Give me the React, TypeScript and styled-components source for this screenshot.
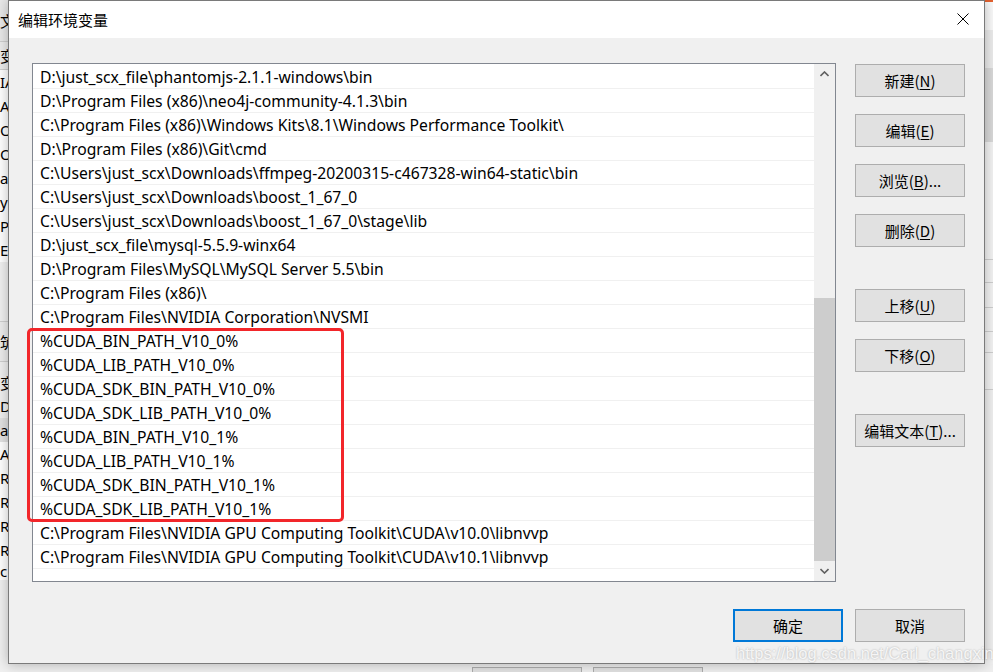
import React from "react";
import styled, { createGlobalStyle } from "styled-components";

const GlobalStyle = createGlobalStyle`
  *, *::before, *::after { box-sizing: border-box; }
  html, body { margin: 0; padding: 0; }
  body {
    background: #f0f0f0;
    font-family: "Noto Sans", "Noto Sans CJK SC", sans-serif;
  }
`;

const pathsBefore = [
  "D:\\just_scx_file\\phantomjs-2.1.1-windows\\bin",
  "D:\\Program Files (x86)\\neo4j-community-4.1.3\\bin",
  "C:\\Program Files (x86)\\Windows Kits\\8.1\\Windows Performance Toolkit\\",
  "D:\\Program Files (x86)\\Git\\cmd",
  "C:\\Users\\just_scx\\Downloads\\ffmpeg-20200315-c467328-win64-static\\bin",
  "C:\\Users\\just_scx\\Downloads\\boost_1_67_0",
  "C:\\Users\\just_scx\\Downloads\\boost_1_67_0\\stage\\lib",
  "D:\\just_scx_file\\mysql-5.5.9-winx64",
  "D:\\Program Files\\MySQL\\MySQL Server 5.5\\bin",
  "C:\\Program Files (x86)\\",
  "C:\\Program Files\\NVIDIA Corporation\\NVSMI",
];

const cudaVars = [
  "%CUDA_BIN_PATH_V10_0%",
  "%CUDA_LIB_PATH_V10_0%",
  "%CUDA_SDK_BIN_PATH_V10_0%",
  "%CUDA_SDK_LIB_PATH_V10_0%",
  "%CUDA_BIN_PATH_V10_1%",
  "%CUDA_LIB_PATH_V10_1%",
  "%CUDA_SDK_BIN_PATH_V10_1%",
  "%CUDA_SDK_LIB_PATH_V10_1%",
];

const pathsAfter = [
  "C:\\Program Files\\NVIDIA GPU Computing Toolkit\\CUDA\\v10.0\\libnvvp",
  "C:\\Program Files\\NVIDIA GPU Computing Toolkit\\CUDA\\v10.1\\libnvvp",
];

// side buttons: label, access key, trailing text, gap above
const sideButtons = [
  { label: "新建", key: "N", tail: "", gap: 0 },
  { label: "编辑", key: "E", tail: "", gap: 17 },
  { label: "浏览", key: "B", tail: "...", gap: 17 },
  { label: "删除", key: "D", tail: "", gap: 17 },
  { label: "上移", key: "U", tail: "", gap: 42 },
  { label: "下移", key: "O", tail: "", gap: 17 },
  { label: "编辑文本", key: "T", tail: "...", gap: 42 },
];

// the window behind, only a sliver of it shows
const peekRows = [
  { h: 42, bg: "#e9e9e9", text: "文_", line: true },
  { h: 28, bg: "#ececec", text: "变", line: true },
  { h: 24, bg: "#fff", text: "IA" },
  { h: 24, bg: "#fff", text: "A" },
  { h: 24, bg: "#fff", text: "Or" },
  { h: 24, bg: "#fff", text: "Or" },
  { h: 24, bg: "#fff", text: "a" },
  { h: 24, bg: "#fff", text: "y" },
  { h: 24, bg: "#fff", text: "P" },
  { h: 24, bg: "#fff", text: "E" },
  { h: 60, bg: "#f0f0f0", text: "", line: true },
  { h: 40, bg: "#ececec", text: "筑", line: true },
  { h: 8, bg: "#f0f0f0", text: "" },
  { h: 24, bg: "#f0f0f0", text: "变" },
  { h: 24, bg: "#f0f0f0", text: "DS" },
  { h: 24, bg: "#e2e2e2", text: "a" },
  { h: 24, bg: "#fff", text: "A" },
  { h: 24, bg: "#fff", text: "R" },
  { h: 24, bg: "#fff", text: "R" },
  { h: 24, bg: "#fff", text: "R" },
  { h: 24, bg: "#fff", text: "R" },
  { h: 18, bg: "#fff", text: "c" },
];

const rightPeek = [
  { h: 2, bg: "#e4622f" },
  { h: 28, bg: "#fafafa" },
  { h: 38, bg: "#ececec" },
  { h: 74, bg: "#d9d9d9" },
  { h: 86, bg: "#f3f3f3" },
  { h: 32, bg: "#f3f3f3", line: true },
  { h: 23, bg: "#f3f3f3", line: true },
  { h: 25, bg: "#f3f3f3", line: true },
  { h: 24, bg: "#f3f3f3", line: true },
  { h: 21, bg: "#f3f3f3", line: true },
  { h: 37, bg: "#f3f3f3", line: true },
];

const Desktop = styled.div`
  position: relative;
  width: 993px;
  height: 672px;
  overflow: hidden;
  display: grid;
  grid-template-columns: 8px 977px 8px;
  grid-template-rows: 664px 8px;
  background: #f0f0f0;
`;

const LeftPeek = styled.div`
  grid-row: 1 / span 2;
  grid-column: 1;
  display: flex;
  flex-direction: column;
  overflow: hidden;
  font-size: 15px;
  color: #000;
`;

const PeekRow = styled.div<{ $h: number; $bg: string; $line?: boolean }>`
  flex: 0 0 ${(p) => p.$h}px;
  background: ${(p) => p.$bg};
  border-bottom: ${(p) => (p.$line ? "1px solid #cfcfcf" : "0")};
  display: flex;
  align-items: center;
  white-space: nowrap;
  overflow: hidden;
  font-family: "Noto Sans", "Noto Sans CJK SC", sans-serif;
`;

const RightPeek = styled.div`
  grid-row: 1;
  grid-column: 3;
  display: flex;
  flex-direction: column;
  overflow: hidden;
`;

const BottomPeek = styled.div`
  grid-row: 2;
  grid-column: 2 / span 2;
  display: flex;
  gap: 11px;
  padding: 3px 0 0 464px;
  background: #efefef;
`;

const PeekButton = styled.div`
  flex: 0 0 110px;
  border: 1px solid #adadad;
  border-bottom: 0;
  background: #e1e1e1;
`;

const Dialog = styled.div`
  grid-row: 1;
  grid-column: 2;
  position: relative;
  z-index: 1;
  display: flex;
  flex-direction: column;
  background: #f0f0f0;
  border: 1px solid #7a7a7a;
  box-shadow: 0 0 12px rgba(0, 0, 0, 0.28);
`;

const TitleBar = styled.div`
  flex: 0 0 37px;
  display: flex;
  align-items: center;
  justify-content: space-between;
  padding: 0 15px 1px 9px;
  background: #fff;
`;

const Title = styled.span`
  font: 15px "Noto Sans CJK SC", sans-serif;
  color: #000;
`;

const CloseIcon = () => (
  <svg width="12" height="12" viewBox="0 0 12 12">
    <path d="M0.5 0.5 L11.5 11.5 M11.5 0.5 L0.5 11.5" stroke="#000" strokeWidth="1" fill="none" />
  </svg>
);

const Body = styled.div`
  flex: 1;
  display: flex;
  flex-direction: column;
  padding: 25px 19px 21px 23px;
`;

const MainRow = styled.div`
  display: flex;
  gap: 19px;
`;

const ListBox = styled.div`
  position: relative;
  flex: 0 0 804px;
  height: 519px;
  display: flex;
  background: #fff;
  border: 1px solid #828790;
`;

const Rows = styled.div`
  flex: 1;
  padding-top: 1px;
`;

const Row = styled.div`
  height: 24px;
  line-height: 25px;
  padding-left: 7px;
  border-bottom: 1px solid #f0f0f0;
  font-size: 15.7px;
  color: #000;
  white-space: nowrap;
`;

const Marked = styled.div`
  position: relative;
  &::after {
    content: "";
    position: absolute;
    left: -6px;
    top: -1px;
    width: 317px;
    height: 194px;
    border: 3.5px solid #f2262a;
    border-radius: 5px;
    pointer-events: none;
  }
`;

const ScrollBar = styled.div`
  flex: 0 0 21px;
  display: flex;
  flex-direction: column;
  background: #f0f0f0;
`;

const ScrollArrow = styled.div`
  flex: 0 0 20px;
  display: flex;
  align-items: center;
  justify-content: center;
`;

const ScrollTrack = styled.div`
  flex: 1;
  display: flex;
  flex-direction: column;
  justify-content: flex-end;
`;

const Thumb = styled.div`
  height: 263px;
  background: #cdcdcd;
`;

const Chevron = ({ up }: { up?: boolean }) => (
  <svg width="9" height="6" viewBox="0 0 9 6">
    <polyline
      points={up ? "0.5,5 4.5,1 8.5,5" : "0.5,1 4.5,5 8.5,1"}
      stroke="#606060"
      strokeWidth="1.6"
      fill="none"
    />
  </svg>
);

const ButtonColumn = styled.div`
  display: flex;
  flex-direction: column;
  padding-top: 1px;
`;

const Button = styled.button<{ $gap?: number; $default?: boolean }>`
  width: 110px;
  height: 33px;
  margin-top: ${(p) => p.$gap ?? 0}px;
  padding: 0;
  background: #e1e1e1;
  border: ${(p) => (p.$default ? "2px solid #0078d7" : "1px solid #adadad")};
  font: 15px "Noto Sans CJK SC", sans-serif;
  color: #000;

  u {
    text-underline-offset: 2px;
  }
`;

const Footer = styled.div`
  display: flex;
  justify-content: flex-end;
  gap: 12px;
  margin-top: 27px;
`;

const Watermark = styled.div`
  position: absolute;
  left: 736px;
  top: 644px;
  z-index: 2;
  font: 16.5px "Liberation Sans", Arial, sans-serif;
  color: rgba(255, 255, 255, 0.85);
  text-shadow: 0 0 2px rgba(0, 0, 0, 0.3);
  white-space: nowrap;
`;

export default function App() {
  return (
    <>
      <GlobalStyle />
      <Desktop>
        <LeftPeek>
          {peekRows.map((r, i) => (
            <PeekRow key={i} $h={r.h} $bg={r.bg} $line={r.line}>
              {r.text}
            </PeekRow>
          ))}
        </LeftPeek>

        <Dialog>
          <TitleBar>
            <Title>编辑环境变量</Title>
            <CloseIcon />
          </TitleBar>
          <Body>
            <MainRow>
              <ListBox>
                <Rows>
                  {pathsBefore.map((p) => (
                    <Row key={p}>{p}</Row>
                  ))}
                  <Marked>
                    {cudaVars.map((v) => (
                      <Row key={v}>{v}</Row>
                    ))}
                  </Marked>
                  {pathsAfter.map((p) => (
                    <Row key={p}>{p}</Row>
                  ))}
                </Rows>
                <ScrollBar>
                  <ScrollArrow>
                    <Chevron up />
                  </ScrollArrow>
                  <ScrollTrack>
                    <Thumb />
                  </ScrollTrack>
                  <ScrollArrow>
                    <Chevron />
                  </ScrollArrow>
                </ScrollBar>
              </ListBox>
              <ButtonColumn>
                {sideButtons.map((b) => (
                  <Button key={b.key} $gap={b.gap}>
                    {b.label}(<u>{b.key}</u>){b.tail}
                  </Button>
                ))}
              </ButtonColumn>
            </MainRow>
            <Footer>
              <Button $default>确定</Button>
              <Button>取消</Button>
            </Footer>
          </Body>
        </Dialog>

        <RightPeek>
          {rightPeek.map((r, i) => (
            <PeekRow key={i} $h={r.h} $bg={r.bg} $line={r.line} />
          ))}
        </RightPeek>

        <BottomPeek>
          <PeekButton />
          <PeekButton />
        </BottomPeek>

        <Watermark>https://blog.csdn.net/Carl_changxin</Watermark>
      </Desktop>
    </>
  );
}
